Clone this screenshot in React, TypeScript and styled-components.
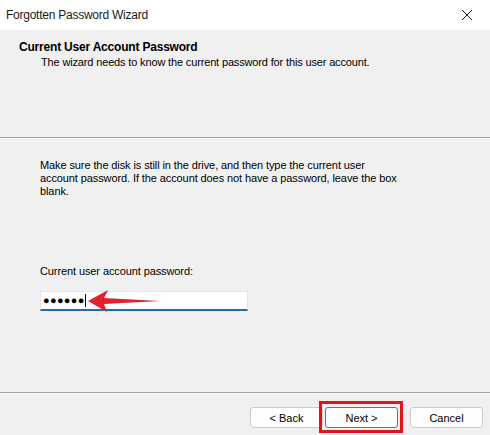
import styled, { createGlobalStyle } from 'styled-components'

const GlobalStyle = createGlobalStyle`
  html, body {
    margin: 0;
    padding: 0;
    background: #f0f0f0;
  }
`

const Window = styled.div`
  width: 490px;
  height: 435px;
  display: flex;
  flex-direction: column;
  background: #f0f0f0;
  font-family: 'Liberation Sans', Arial, sans-serif;
  color: #000;
  overflow: hidden;
`

const TitleBar = styled.div`
  height: 30px;
  flex: none;
  background: #fff;
  display: flex;
  align-items: center;
  justify-content: space-between;
  padding-left: 6px;
  font-size: 12px;
  letter-spacing: -0.25px;
  color: #1a1a1a;
`

const CloseButton = styled.div`
  width: 46px;
  height: 30px;
  display: flex;
  align-items: center;
  justify-content: center;
`

const Header = styled.div`
  height: 107px;
  flex: none;
  padding: 10px 0 0 19px;
  box-sizing: border-box;
`

const HeaderTitle = styled.div`
  font-weight: bold;
  font-size: 12px;
  letter-spacing: -0.2px;
  line-height: 15px;
`

const HeaderSubtitle = styled.div`
  font-size: 11px;
  letter-spacing: -0.15px;
  line-height: 14px;
  padding-left: 22px;
`

const Separator = styled.div`
  height: 1px;
  flex: none;
  background: #a0a0a0;
  border-bottom: 1px solid #f8f8f8;
`

const Body = styled.div`
  flex: 1;
  padding: 20px 0 0 40px;
  font-size: 11px;
`

const Paragraph = styled.p`
  margin: 0;
  white-space: nowrap;
  line-height: 13px;
  letter-spacing: -0.1px;
`

const Label = styled.div`
  margin-top: 66px;
  line-height: 14px;
  letter-spacing: -0.1px;
`

const FieldWrap = styled.div`
  position: relative;
  margin-top: 13px;
  width: 208px;
`

const Input = styled.div`
  height: 17px;
  background: #fff;
  border: 1px solid #e5e5e5;
  border-bottom: 2px solid #1d6fab;
  display: flex;
  align-items: center;
  padding-left: 2px;
`

const Dots = styled.span`
  font-size: 11px;
  letter-spacing: 0.3px;
  line-height: 1;
`

const Caret = styled.span`
  width: 1px;
  height: 13px;
  background: #000;
`

const Arrow = styled.svg`
  position: absolute;
  left: 46px;
  top: -4px;
`

const Footer = styled.div`
  height: 41px;
  flex: none;
  display: flex;
  align-items: flex-start;
  justify-content: flex-end;
  padding: 13px 7px 0 0;
  box-sizing: border-box;
`

const ButtonGroup = styled.div`
  display: flex;
  gap: 2px;
  margin-right: 12px;
`

const Button = styled.div<{ $focused?: boolean }>`
  position: relative;
  flex: none;
  width: 71px;
  height: 19px;
  box-sizing: content-box;
  border: 1px solid ${p => (p.$focused ? '#2f7fc7' : '#cccccc')};
  border-radius: 3px;
  background: #fdfdfd;
  display: flex;
  align-items: center;
  justify-content: center;
  font-size: 11px;
`

const Highlight = styled.div`
  position: absolute;
  left: -7px;
  top: -7px;
  right: -6px;
  bottom: -6px;
  border: 3px solid #e0151b;
`

export default function App() {
  return (
    <>
      <GlobalStyle />
      <Window>
        <TitleBar>
          <span>Forgotten Password Wizard</span>
          <CloseButton>
            <svg width="12" height="12" viewBox="0 0 12 12">
              <path d="M1 1 L11 11 M11 1 L1 11" stroke="#222" strokeWidth="1" />
            </svg>
          </CloseButton>
        </TitleBar>

        <Header>
          <HeaderTitle>Current User Account Password</HeaderTitle>
          <HeaderSubtitle>
            The wizard needs to know the current password for this user account.
          </HeaderSubtitle>
        </Header>
        <Separator />

        <Body>
          <Paragraph>
            Make sure the disk is still in the drive, and then type the current user
            <br />
            account password. If the account does not have a password, leave the box
            <br />
            blank.
          </Paragraph>
          <Label>Current user account password:</Label>
          <FieldWrap>
            <Input>
              <Dots>●●●●●●</Dots>
              <Caret />
            </Input>
            <Arrow width="80" height="28" viewBox="0 0 80 28">
              <path
                d="M2 14 L22 3 L18 11 L74 14 L18 17 L21 25 Z"
                fill="#e4202a"
              />
            </Arrow>
          </FieldWrap>
        </Body>

        <Separator />
        <Footer>
          <ButtonGroup>
            <Button>&lt; Back</Button>
            <Button $focused>
              Next &gt;
              <Highlight />
            </Button>
          </ButtonGroup>
          <Button>Cancel</Button>
        </Footer>
      </Window>
    </>
  )
}
